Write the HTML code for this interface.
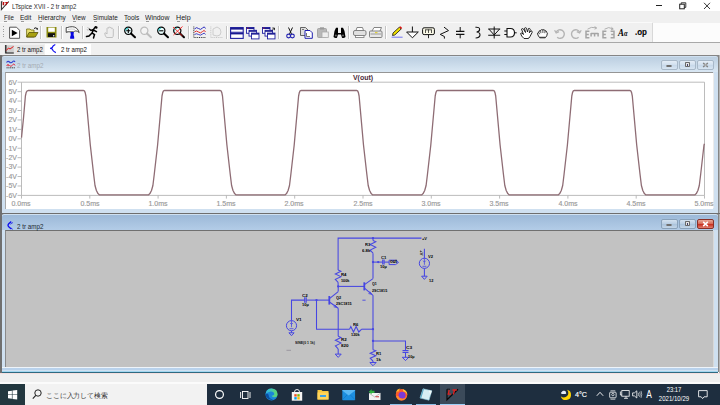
<!DOCTYPE html>
<html><head><meta charset="utf-8"><style>
html,body{margin:0;padding:0;}
body{width:720px;height:405px;position:relative;overflow:hidden;background:#fff;font-family:"Liberation Sans", sans-serif;}
svg{display:block}
</style></head><body>
<div style="position:absolute;left:0px;top:0px;width:720px;height:11px;background:#fff"></div>
<svg style="position:absolute;left:0px;top:0px;" width="11" height="11" viewBox="0 0 11 11"><path d="M1.4 1.3 V9.6 L8.8 1.5" fill="none" stroke="#333" stroke-width="1.1"/><path d="M2.6 1.9 H5 L4.2 2.6 V5.2 H2.6 Z M5.5 1.9 H8.6 L7.2 3.5 L6.5 5.2 H5.4 L5.9 2.9 H5.1 Z" fill="#b81010"/><path d="M1.4 1.3 H3" stroke="#555" stroke-width="0.5"/></svg>
<div style="position:absolute;left:12.2px;top:2.52px;font-size:7.6px;line-height:1;white-space:nowrap;color:#2a2a2a;font-weight:normal;transform:scaleX(0.8);transform-origin:0 0;">LTspice XVII - 2 tr amp2</div>
<div style="position:absolute;left:656px;top:5px;width:6px;height:0.8px;background:#222"></div>
<svg style="position:absolute;left:679px;top:2px;" width="8" height="8" viewBox="0 0 8 8"><rect x="0.7" y="2.2" width="4.6" height="4.6" fill="none" stroke="#222" stroke-width="1"/><path d="M2.2 2.2 V0.8 H6.8 V5.4 H5.3" fill="none" stroke="#222" stroke-width="0.9"/></svg>
<svg style="position:absolute;left:703px;top:2px;" width="8" height="8" viewBox="0 0 8 8"><path d="M1 0.8 L7 7 M7 0.8 L1 7" stroke="#222" stroke-width="0.9"/></svg>
<div style="position:absolute;left:0px;top:11px;width:720px;height:11px;background:#f0f0f0"></div>
<div style="position:absolute;left:3.5px;top:13.77px;font-size:7.6px;line-height:1;white-space:nowrap;color:#1a1a1a;font-weight:normal;transform:scaleX(0.808);transform-origin:0 0;">File</div>
<div style="position:absolute;left:4.1px;top:20.6px;width:3.3px;height:0.6px;background:#999"></div>
<div style="position:absolute;left:20.1px;top:13.77px;font-size:7.6px;line-height:1;white-space:nowrap;color:#1a1a1a;font-weight:normal;transform:scaleX(0.863);transform-origin:0 0;">Edit</div>
<div style="position:absolute;left:20.7px;top:20.6px;width:3.3px;height:0.6px;background:#999"></div>
<div style="position:absolute;left:37.9px;top:13.77px;font-size:7.6px;line-height:1;white-space:nowrap;color:#1a1a1a;font-weight:normal;transform:scaleX(0.855);transform-origin:0 0;">Hierarchy</div>
<div style="position:absolute;left:38.5px;top:20.6px;width:3.3px;height:0.6px;background:#999"></div>
<div style="position:absolute;left:72.39999999999999px;top:13.77px;font-size:7.6px;line-height:1;white-space:nowrap;color:#1a1a1a;font-weight:normal;transform:scaleX(0.832);transform-origin:0 0;">View</div>
<div style="position:absolute;left:73.0px;top:20.6px;width:3.3px;height:0.6px;background:#999"></div>
<div style="position:absolute;left:92.89999999999999px;top:13.77px;font-size:7.6px;line-height:1;white-space:nowrap;color:#1a1a1a;font-weight:normal;transform:scaleX(0.835);transform-origin:0 0;">Simulate</div>
<div style="position:absolute;left:93.5px;top:20.6px;width:3.3px;height:0.6px;background:#999"></div>
<div style="position:absolute;left:124.0px;top:13.77px;font-size:7.6px;line-height:1;white-space:nowrap;color:#1a1a1a;font-weight:normal;transform:scaleX(0.862);transform-origin:0 0;">Tools</div>
<div style="position:absolute;left:124.60000000000001px;top:20.6px;width:3.3px;height:0.6px;background:#999"></div>
<div style="position:absolute;left:145.4px;top:13.77px;font-size:7.6px;line-height:1;white-space:nowrap;color:#1a1a1a;font-weight:normal;transform:scaleX(0.903);transform-origin:0 0;">Window</div>
<div style="position:absolute;left:146.0px;top:20.6px;width:3.3px;height:0.6px;background:#999"></div>
<div style="position:absolute;left:176.0px;top:13.77px;font-size:7.6px;line-height:1;white-space:nowrap;color:#1a1a1a;font-weight:normal;transform:scaleX(0.94);transform-origin:0 0;">Help</div>
<div style="position:absolute;left:176.6px;top:20.6px;width:3.3px;height:0.6px;background:#999"></div>
<div style="position:absolute;left:0px;top:22px;width:720px;height:20px;background:#f0f0f0"></div>
<div style="position:absolute;left:652px;top:23px;width:68px;height:19px;background:#fcfcfc"></div>
<div style="position:absolute;left:651.5px;top:23px;width:1px;height:19px;background:#d8d8d8"></div>
<div style="position:absolute;left:0px;top:22px;width:652px;height:1px;background:#fafafa"></div>
<div style="position:absolute;left:0px;top:41.5px;width:720px;height:1px;background:#a8a8a8"></div>
<div style="position:absolute;left:2.5px;top:26.0px;width:1px;height:1px;background:#a0a0a0"></div>
<div style="position:absolute;left:2.5px;top:28.6px;width:1px;height:1px;background:#a0a0a0"></div>
<div style="position:absolute;left:2.5px;top:31.2px;width:1px;height:1px;background:#a0a0a0"></div>
<div style="position:absolute;left:2.5px;top:33.8px;width:1px;height:1px;background:#a0a0a0"></div>
<div style="position:absolute;left:2.5px;top:36.4px;width:1px;height:1px;background:#a0a0a0"></div>
<svg style="position:absolute;left:9px;top:26px;overflow:visible" width="12" height="13" viewBox="0 0 12 13"><path d="M0.6 1.2 H7.5 L10.6 4.3 V12.3 H0.6 Z" fill="#fff" stroke="#555" stroke-width="1"/><path d="M2.8 3.7 L8.6 7 L2.8 10.3 Z" fill="#000"/></svg>
<svg style="position:absolute;left:25.5px;top:26px;overflow:visible" width="13" height="13" viewBox="0 0 13 13"><path d="M0.6 3 H4 L5 4 H8 V11 H0.6 Z" fill="#e8e070" stroke="#6e6a10" stroke-width="0.8"/><path d="M0.6 11 L3 6.5 H12 L9.3 11 Z" fill="#a8a010" stroke="#55520a" stroke-width="0.8"/><path d="M8 2.5 Q10 0.8 11.5 3" fill="none" stroke="#111" stroke-width="1"/><path d="M10.2 3.4 L12 3.6 L11.8 1.8 Z" fill="#111"/></svg>
<div style="position:absolute;left:40.3px;top:26px;width:1px;height:13px;background:#c4c4c4"></div>
<div style="position:absolute;left:41.3px;top:26px;width:0.6px;height:13px;background:#ffffff"></div>
<svg style="position:absolute;left:46.3px;top:26px;overflow:visible" width="11" height="12" viewBox="0 0 11 12"><rect x="0.5" y="1" width="10" height="10.5" fill="#8a8a10"/><rect x="2.2" y="1.6" width="6.6" height="4.2" fill="#fff"/><rect x="2" y="7.2" width="7" height="3.8" fill="#111"/><rect x="7" y="9.2" width="1.4" height="1.2" fill="#fff"/></svg>
<div style="position:absolute;left:60.8px;top:26px;width:1px;height:13px;background:#c4c4c4"></div>
<div style="position:absolute;left:61.8px;top:26px;width:0.6px;height:13px;background:#ffffff"></div>
<svg style="position:absolute;left:65px;top:26px;overflow:visible" width="15" height="14" viewBox="0 0 15 14"><path d="M1.2 1.6 H2.2 Q4 0.7 7.5 0.7 Q12.5 1 14.2 6.6 Q12.8 5 10.8 4.9 Q9.5 5.3 8.5 5.8 H2.2 V6.3 H1.2 Z" fill="#fff" stroke="#333" stroke-width="0.9" stroke-linejoin="round"/><path d="M3 3.4 Q6 2.6 10 3.3" stroke="#999" stroke-width="0.5" fill="none"/><path d="M5.5 6 H8.8 L8.6 9 Q9.5 11 9.2 12.7 H5.2 Q4.8 11 5.8 9 Z" fill="#0808e0"/></svg>
<div style="position:absolute;left:81.5px;top:26px;width:1px;height:13px;background:#c4c4c4"></div>
<div style="position:absolute;left:82.5px;top:26px;width:0.6px;height:13px;background:#ffffff"></div>
<svg style="position:absolute;left:86px;top:26px;overflow:visible" width="12" height="13" viewBox="0 0 12 13"><path d="M9.5 0.8 L7.5 3.5 L5 4.5 L3.5 3.2 M7.5 3.5 L6 7 L8.5 8.5 L7.5 12 M6 7 L3 10 L0.5 10.5 M7.3 4 L10.5 5.6" fill="none" stroke="#000" stroke-width="1.5" stroke-linecap="round"/><circle cx="10.3" cy="1.5" r="1.2" fill="#000"/><path d="M1.5 1.5 L3 2.6 M0.8 3.5 L2.3 4.3" stroke="#888" stroke-width="0.6"/></svg>
<svg style="position:absolute;left:104px;top:26px;overflow:visible" width="11" height="13" viewBox="0 0 11 13"><path d="M2.5 11.5 Q0.5 9 0.8 7 L1.8 6.8 L3 8 V2.5 Q3.5 1.3 4.3 2.3 V1.5 Q5.2 0.5 6 1.5 V1.8 Q7 1 7.7 2 V2.6 Q8.7 1.9 9.3 3 V9 Q9.2 11 8.5 11.5 Z" fill="#eee" stroke="#bbb" stroke-width="0.9"/></svg>
<div style="position:absolute;left:118.1px;top:26px;width:1px;height:13px;background:#c4c4c4"></div>
<div style="position:absolute;left:119.1px;top:26px;width:0.6px;height:13px;background:#ffffff"></div>
<svg style="position:absolute;left:124px;top:26.3px;overflow:visible" width="12" height="12" viewBox="0 0 12 12"><circle cx="4.3" cy="4.8" r="3.6" fill="#e8fcfc" stroke="#000" stroke-width="1.2"/><path d="M1.5 4.5 A3 3 0 0 1 4 2" stroke="#30d0d0" stroke-width="1.2" fill="none"/><path d="M7 7.5 L11 11.3" stroke="#000" stroke-width="2" stroke-linecap="round"/><path d="M2.2 4.8 H6.4 M4.3 2.7 V6.9" stroke="#000" stroke-width="1.1"/></svg>
<svg style="position:absolute;left:140.4px;top:26.3px;overflow:visible" width="12" height="12" viewBox="0 0 12 12"><circle cx="4.3" cy="4.8" r="3.6" fill="#f4f4f4" stroke="#bdbdbd" stroke-width="1.2"/><path d="M7 7.5 L11 11.3" stroke="#bdbdbd" stroke-width="2" stroke-linecap="round"/></svg>
<svg style="position:absolute;left:156.6px;top:26.3px;overflow:visible" width="12" height="12" viewBox="0 0 12 12"><circle cx="4.3" cy="4.8" r="3.6" fill="#e8fcfc" stroke="#000" stroke-width="1.2"/><path d="M1.5 4.5 A3 3 0 0 1 4 2" stroke="#30d0d0" stroke-width="1.2" fill="none"/><path d="M7 7.5 L11 11.3" stroke="#000" stroke-width="2" stroke-linecap="round"/><path d="M2.2 4.8 H6.4" stroke="#000" stroke-width="1.1"/></svg>
<svg style="position:absolute;left:173px;top:26.3px;overflow:visible" width="12" height="12" viewBox="0 0 12 12"><circle cx="4.3" cy="4.8" r="3.6" fill="#e8fcfc" stroke="#000" stroke-width="1.2"/><path d="M1.5 4.5 A3 3 0 0 1 4 2" stroke="#30d0d0" stroke-width="1.2" fill="none"/><path d="M7 7.5 L11 11.3" stroke="#000" stroke-width="2" stroke-linecap="round"/><path d="M0 1 L9.5 10 M9.5 0.5 L0.5 9" stroke="#ff2020" stroke-width="0.9"/></svg>
<div style="position:absolute;left:188.0px;top:26px;width:1px;height:13px;background:#c4c4c4"></div>
<div style="position:absolute;left:189.0px;top:26px;width:0.6px;height:13px;background:#ffffff"></div>
<svg style="position:absolute;left:193px;top:26px;overflow:visible" width="13" height="12" viewBox="0 0 13 12"><path d="M0.8 0.5 V11.5 H12.5" fill="none" stroke="#222" stroke-width="0.9" stroke-dasharray="1 0.8"/><path d="M1.5 3 Q3.5 0.5 5.5 2.5 T9.5 2 T12.5 2.5" fill="none" stroke="#3030c0" stroke-width="1"/><path d="M1.5 6 Q3.5 4 5.5 6 T9.5 5.5 T12.5 6" fill="none" stroke="#e03030" stroke-width="1"/><path d="M1.5 8.5 Q3.5 7 5.5 8.5 T9.5 8 T12.5 8.5" fill="none" stroke="#3030c0" stroke-width="0.9"/></svg>
<svg style="position:absolute;left:209.5px;top:26px;overflow:visible" width="13" height="12" viewBox="0 0 13 12"><path d="M0.8 0.5 V11.5 H12.5" fill="none" stroke="#bbb" stroke-width="0.8" stroke-dasharray="1 0.8"/><path d="M3 9 V3 L7 1 Q11 2 11 6 Q11 10 7 10 Z" fill="none" stroke="#c8c8c8" stroke-width="0.9"/></svg>
<div style="position:absolute;left:225.5px;top:26px;width:1px;height:13px;background:#c4c4c4"></div>
<div style="position:absolute;left:226.5px;top:26px;width:0.6px;height:13px;background:#ffffff"></div>
<svg style="position:absolute;left:229.5px;top:26.5px;overflow:visible" width="14" height="12" viewBox="0 0 14 12"><rect x="0.6" y="0.6" width="12.6" height="10.8" fill="#fff" stroke="#2020a0" stroke-width="1.1"/><rect x="0.6" y="0.6" width="12.6" height="2" fill="#1a1a90"/><rect x="0.6" y="5.4" width="12.6" height="2" fill="#1a1a90"/><path d="M0.6 5.2 H13.2" stroke="#2020a0" stroke-width="0.8"/></svg>
<svg style="position:absolute;left:246.2px;top:26.5px;overflow:visible" width="14" height="12" viewBox="0 0 14 12"><rect x="0.5" y="0.5" width="7.5" height="5.8" fill="#fff" stroke="#2020a0" stroke-width="0.9"/><rect x="0.5" y="0.5" width="7.5" height="1.5" fill="#1a1a90"/><rect x="3.0" y="3.3" width="7.5" height="5.8" fill="#fff" stroke="#2020a0" stroke-width="0.9"/><rect x="3.0" y="3.3" width="7.5" height="1.5" fill="#1a1a90"/><rect x="5.5" y="6.1" width="7.5" height="5.8" fill="#fff" stroke="#2020a0" stroke-width="0.9"/><rect x="5.5" y="6.1" width="7.5" height="1.5" fill="#1a1a90"/><path d="M1 1.2 H2.5" stroke="#e02020" stroke-width="0.7"/></svg>
<svg style="position:absolute;left:262.2px;top:26.5px;overflow:visible" width="14" height="12" viewBox="0 0 14 12"><rect x="0.5" y="0.5" width="7.5" height="5.8" fill="#fff" stroke="#2020a0" stroke-width="0.9"/><rect x="0.5" y="0.5" width="7.5" height="1.5" fill="#1a1a90"/><rect x="3.0" y="3.3" width="7.5" height="5.8" fill="#fff" stroke="#2020a0" stroke-width="0.9"/><rect x="3.0" y="3.3" width="7.5" height="1.5" fill="#1a1a90"/><rect x="5.5" y="6.1" width="7.5" height="5.8" fill="#fff" stroke="#2020a0" stroke-width="0.9"/><rect x="5.5" y="6.1" width="7.5" height="1.5" fill="#1a1a90"/><path d="M1 1.2 H2.5" stroke="#e02020" stroke-width="0.7"/><path d="M10 3.5 L12.5 1 M10.3 1 H12.5 V3.2" fill="none" stroke="#111" stroke-width="0.8"/></svg>
<div style="position:absolute;left:278.1px;top:26px;width:1px;height:13px;background:#c4c4c4"></div>
<div style="position:absolute;left:279.1px;top:26px;width:0.6px;height:13px;background:#ffffff"></div>
<svg style="position:absolute;left:285.8px;top:26.5px;overflow:visible" width="9" height="12" viewBox="0 0 9 12"><path d="M2.5 0.5 L5.5 7 M6.5 0.5 L3.5 7" stroke="#111" stroke-width="1"/><circle cx="2.6" cy="9" r="1.9" fill="none" stroke="#2020b0" stroke-width="1.1"/><circle cx="6.4" cy="9" r="1.9" fill="none" stroke="#2020b0" stroke-width="1.1"/></svg>
<svg style="position:absolute;left:300px;top:26.5px;overflow:visible" width="13" height="12" viewBox="0 0 13 12"><path d="M0.5 0.5 H5.5 L8 3 V8.5 H0.5 Z" fill="#ddd" stroke="#555" stroke-width="0.9"/><path d="M2 2.5 H4" stroke="#333" stroke-width="0.6"/><path d="M5 3.5 H10 L12.3 5.8 V11.3 H5 Z" fill="#fff" stroke="#2020b0" stroke-width="1"/><path d="M6.5 6 V9.5 H10" stroke="#555" stroke-width="0.8" fill="none"/></svg>
<svg style="position:absolute;left:316.5px;top:27px;overflow:visible" width="12" height="11" viewBox="0 0 12 11"><rect x="0.5" y="1.5" width="9" height="9" rx="1" fill="#b8b8b8" stroke="#9a9a9a" stroke-width="0.8"/><rect x="3" y="0.3" width="4" height="2.2" fill="#9a9a9a"/><rect x="5" y="5" width="6.3" height="5.5" fill="#eee" stroke="#aaa" stroke-width="0.8"/></svg>
<svg style="position:absolute;left:332.5px;top:26.5px;overflow:visible" width="13" height="12" viewBox="0 0 13 12"><path d="M1.5 4 L3 0.8 H5 V6 H8 V0.8 H10 L11.5 4 L12.5 10 Q11 11.5 9 10.8 L8 7.5 H5 L4 10.8 Q2 11.5 0.5 10 Z" fill="#000"/><circle cx="2.8" cy="8.5" r="1" fill="#666"/><circle cx="10" cy="8.5" r="1" fill="#666"/></svg>
<div style="position:absolute;left:347.8px;top:26px;width:1px;height:13px;background:#c4c4c4"></div>
<div style="position:absolute;left:348.8px;top:26px;width:0.6px;height:13px;background:#ffffff"></div>
<svg style="position:absolute;left:353px;top:27px;overflow:visible" width="14" height="11" viewBox="0 0 14 11"><path d="M3 3.5 L4 0.5 H9.5 L10.5 3.5" fill="#fff" stroke="#777" stroke-width="0.9"/><rect x="0.5" y="3.5" width="12.5" height="5" rx="1.5" fill="#e0e0e0" stroke="#777" stroke-width="0.9"/><rect x="2.5" y="8.5" width="8.5" height="2" fill="#fff" stroke="#777" stroke-width="0.8"/></svg>
<svg style="position:absolute;left:368.8px;top:26.8px;overflow:visible" width="14" height="11" viewBox="0 0 14 11"><path d="M3 4 L5 0.5 H12.5 L11 4" fill="#fff" stroke="#777" stroke-width="0.9"/><rect x="0.5" y="4" width="12.5" height="6.5" rx="1" fill="#e8e8e8" stroke="#777" stroke-width="0.9"/><path d="M1.5 7 H12" stroke="#777" stroke-width="0.7"/><rect x="6" y="5" width="2.5" height="1.2" fill="#e0d040"/></svg>
<div style="position:absolute;left:385.1px;top:26px;width:1px;height:13px;background:#c4c4c4"></div>
<div style="position:absolute;left:386.1px;top:26px;width:0.6px;height:13px;background:#ffffff"></div>
<svg style="position:absolute;left:390.8px;top:26px;overflow:visible" width="12" height="12" viewBox="0 0 12 12"><path d="M1.5 9.5 L2 7 L8.3 1.2 L10.2 3 L3.8 9 Z" fill="#f0e000" stroke="#111" stroke-width="0.8"/><path d="M8.3 1.2 L9.5 0.2 L11.2 2 L10.2 3 Z" fill="#e01010"/><path d="M0.6 11.2 H11.6" stroke="#7070f0" stroke-width="1"/></svg>
<svg style="position:absolute;left:405.8px;top:26px;overflow:visible" width="13" height="13" viewBox="0 0 13 13"><path d="M6.4 0.5 V6" stroke="#111" stroke-width="1"/><path d="M0.6 6 H12.3 L6.4 11.8 Z" fill="#fff" stroke="#111" stroke-width="1"/></svg>
<svg style="position:absolute;left:421.8px;top:27px;overflow:visible" width="13" height="12" viewBox="0 0 13 12"><rect x="0.6" y="0.8" width="11.8" height="6.8" rx="1.5" fill="#fbfae8" stroke="#111" stroke-width="1"/><path d="M3.5 2.5 V6 M6.5 2.5 V6 M9.5 2.5 V6 M3.5 2.8 H9.5" stroke="#111" stroke-width="0.7"/><path d="M6.5 7.6 V11.2" stroke="#111" stroke-width="0.9"/></svg>
<svg style="position:absolute;left:440.3px;top:27px;overflow:visible" width="8" height="12" viewBox="0 0 8 12"><path d="M4 0.1 L8.5 3.6 L0.2 7.4 L4.4 9.5 V11.6" fill="none" stroke="#111" stroke-width="1"/></svg>
<svg style="position:absolute;left:456.1px;top:26px;overflow:visible" width="10" height="13" viewBox="0 0 10 13"><path d="M4.2 1 V5.3 M4.2 8.4 V12.3" stroke="#111" stroke-width="1"/><path d="M0 5.3 H8.4 M0 8.4 H8.4" stroke="#111" stroke-width="1.3"/></svg>
<svg style="position:absolute;left:474.6px;top:26px;overflow:visible" width="7" height="13" viewBox="0 0 7 13"><path d="M0.4 1.3 Q4.8 0.8 4.6 3.6 Q4.4 5.8 1.6 6 Q5.2 6.4 5 9.2 Q4.5 12 0.6 12" fill="none" stroke="#111" stroke-width="1.1"/></svg>
<svg style="position:absolute;left:488.3px;top:26px;overflow:visible" width="13" height="13" viewBox="0 0 13 13"><path d="M6.2 0.5 V12.5" stroke="#111" stroke-width="1"/><path d="M0.2 3.0 H12.2 M0.2 9.2 H12.2" stroke="#111" stroke-width="1.1"/><path d="M0.8 3.0 L6.2 9.0 L11.6 3.0" fill="none" stroke="#111" stroke-width="1"/></svg>
<svg style="position:absolute;left:504px;top:27px;overflow:visible" width="13" height="12" viewBox="0 0 13 12"><path d="M3 1.5 H6.5 Q10.5 1.5 10.5 5.8 Q10.5 10 6.5 10 H3 Z" fill="#fff" stroke="#111" stroke-width="1.1"/><path d="M0.3 4 H3 M0.3 7.5 H3 M10.5 5.8 H12.7" stroke="#111" stroke-width="1"/></svg>
<svg style="position:absolute;left:520.2px;top:26.5px;overflow:visible" width="13" height="12" viewBox="0 0 13 12"><path d="M4 11.5 Q1 9 0.6 6.5 L1.8 6 L3.5 7.5 L1.5 2 Q2.5 1 3.5 2 L5.5 5.5 L4.5 1.2 Q5.5 0.2 6.5 1.2 L7.5 5 L8.5 1.5 Q9.8 1 10.3 2.2 L9.3 5.8 L11 3.8 Q12.5 4 12.2 5.3 L10 9.5 Q9 11.5 8 11.5 Z" fill="#fff" stroke="#111" stroke-width="0.9"/><circle cx="2.5" cy="6.5" r="0.5" fill="#111"/></svg>
<svg style="position:absolute;left:537.2px;top:28.8px;overflow:visible" width="11" height="10" viewBox="0 0 11 10"><path d="M2.8 8.8 Q1.2 7 0.6 5 Q0.4 3.6 1.8 3.2 Q2 1.3 3.6 1.4 Q4.5 0.2 5.8 0.8 Q7.2 0.3 8 1.6 Q9.6 1.8 9.8 3.4 L10.4 4.2 Q10.2 7.2 8.2 8.8 Z" fill="#fff" stroke="#111" stroke-width="0.9" stroke-linejoin="round"/><path d="M3.6 1.6 L3.9 4.2 M5.8 1 L5.9 4 M8 1.8 L7.8 4.2 M1.8 3.4 L2.6 5.2" stroke="#111" stroke-width="0.7"/><path d="M2.9 8.2 H8.1" stroke="#111" stroke-width="0.6"/></svg>
<svg style="position:absolute;left:553.5px;top:27.5px;overflow:visible" width="12" height="11" viewBox="0 0 12 11"><path d="M2.2 4 A4.3 4.3 0 1 1 3.2 9.3" fill="none" stroke="#b4b4b4" stroke-width="1.4"/><path d="M0.6 2.2 L2.2 5 L5 3.6" fill="none" stroke="#b4b4b4" stroke-width="1.3"/></svg>
<svg style="position:absolute;left:570px;top:27.5px;overflow:visible" width="12" height="11" viewBox="0 0 12 11"><path d="M9.6 4 A4.3 4.3 0 1 0 8.6 9.3" fill="none" stroke="#b4b4b4" stroke-width="1.4"/><path d="M11.2 2.2 L9.6 5 L6.8 3.6" fill="none" stroke="#b4b4b4" stroke-width="1.3"/></svg>
<svg style="position:absolute;left:585px;top:26px;overflow:visible" width="14" height="13" viewBox="0 0 14 13"><path d="M2.5 3.2 Q6 0.3 11 1.8" fill="none" stroke="#a8a8a8" stroke-width="0.9"/><path d="M9.6 0.6 L11.8 2 L9.6 3.2" fill="none" stroke="#a8a8a8" stroke-width="0.9"/><path d="M4.4 5.2 H1 V11.8 H4.4 M1 8.5 H3.8" fill="none" stroke="#a4a4a4" stroke-width="1.5"/><path d="M6 7.4 H13.2 M6.1 7.0 V10.4 M9.6 7.4 V10.4 M13.1 7.0 V10.4" fill="none" stroke="#a4a4a4" stroke-width="1.5"/></svg>
<svg style="position:absolute;left:602px;top:26px;overflow:visible" width="14" height="13" viewBox="0 0 14 13"><path d="M2.5 3.2 Q6.5 0.2 11 2.8" fill="none" stroke="#a8a8a8" stroke-width="0.9"/><path d="M9.4 1.2 L11.3 3 L9 3.8" fill="none" stroke="#a8a8a8" stroke-width="0.9"/><path d="M4.4 5.2 H1 V11.8 H4.4 M1 8.5 H3.8" fill="none" stroke="#a4a4a4" stroke-width="1.5"/><path d="M8.6 5.2 H12 V11.8 H8.6 M12 8.5 H9.2" fill="none" stroke="#a4a4a4" stroke-width="1.5"/></svg>
<div style="position:absolute;left:618.3px;top:27.81px;font-size:10.5px;line-height:1;white-space:nowrap;color:#000;font-weight:bold;transform:scaleX(0.85);transform-origin:0 0;font-style:italic;font-family:Liberation Serif,serif;">A<span style="font-size:7.5px">α</span></div>
<div style="position:absolute;left:635px;top:28.29px;font-size:8.4px;line-height:1;white-space:nowrap;color:#000;font-weight:bold;transform:scaleX(0.95);transform-origin:0 0;-webkit-text-stroke:0.1px #000;">.op</div>
<div style="position:absolute;left:0px;top:42.5px;width:720px;height:12.5px;background:#f0f0f0"></div>
<div style="position:absolute;left:4.3px;top:44.9px;width:40px;height:8.9px;background:#e6e6e6"></div>
<svg style="position:absolute;left:5px;top:45.2px;overflow:visible" width="9" height="9" viewBox="0 0 9 9"><rect x="0.8" y="0.3" width="8" height="7.3" fill="#cfcfcf"/><path d="M0.8 0 V8 H8.8" stroke="#111" stroke-width="1.2" fill="none"/><path d="M1.3 5.5 L3.5 3 L5 4 L8.5 1.5" stroke="#e81818" stroke-width="1" fill="none"/></svg>
<div style="position:absolute;left:16.6px;top:45.64px;font-size:7.4px;line-height:1;white-space:nowrap;color:#111;font-weight:normal;transform:scaleX(0.83);transform-origin:0 0;">2 tr amp2</div>
<div style="position:absolute;left:44.6px;top:43.6px;width:46px;height:11.4px;background:#fff"></div>
<svg style="position:absolute;left:50px;top:44.3px;overflow:visible" width="7" height="10" viewBox="0 0 7 10"><path d="M5.3 0.5 Q2.6 1.6 2.2 3.6 L0.6 4.3 L2.2 5 Q2.6 7.2 5.8 8.6" fill="none" stroke="#1010f0" stroke-width="1.3" stroke-linejoin="round"/></svg>
<div style="position:absolute;left:60.6px;top:45.64px;font-size:7.4px;line-height:1;white-space:nowrap;color:#111;font-weight:normal;transform:scaleX(0.83);transform-origin:0 0;">2 tr amp2</div>
<div style="position:absolute;left:0px;top:55px;width:720px;height:317px;background:#858585"></div>
<div style="position:absolute;left:0px;top:55px;width:1.8px;height:318px;background:#707070"></div>
<div style="position:absolute;left:719px;top:55px;width:1px;height:318px;background:#b4b4b4"></div>
<div style="position:absolute;left:1.8px;top:55.9px;width:716.4px;height:157.4px;background:#cfe0f0;border-radius:2px 2px 0 0;"></div>
<div style="position:absolute;left:2.0px;top:56.5px;width:716px;height:15.4px;background:linear-gradient(#bccfe1,#d9e7f3);border-radius:2px 2px 0 0"></div>
<div style="position:absolute;left:5.0px;top:72.0px;width:708.2px;height:136.8px;background:#fff;border-top:0.9px solid #959595;border-left:1.5px solid #a8a8a8;box-sizing:border-box"></div>
<div style="position:absolute;left:712.6px;top:72.5px;width:1.2px;height:135.3px;background:#ececec"></div>
<svg style="position:absolute;left:6.3px;top:60.3px;overflow:visible" width="9" height="10" viewBox="0 0 9 10"><path d="M0.5 2.5 Q2 0.5 3.5 2 T6.5 1.8 T9 2" fill="none" stroke="#3040d0" stroke-width="1.1"/><path d="M0.5 5.5 Q2 3.5 3.5 5.5 T6.5 5 T9 5.5" fill="none" stroke="#e03040" stroke-width="1"/><rect x="1.5" y="5" width="1.2" height="1.2" fill="#e03040"/><path d="M0.5 7.8 H9" stroke="#444" stroke-width="1" stroke-dasharray="1.2 0.6"/></svg>
<div style="position:absolute;left:16.7px;top:62.21px;font-size:7.2px;line-height:1;white-space:nowrap;color:#a4aab2;font-weight:normal;transform:scaleX(0.87);transform-origin:0 0;">2 tr amp2</div>
<div style="position:absolute;left:0px;top:213.3px;width:720px;height:1.2px;background:#6e6e6e"></div>
<div style="position:absolute;left:1.8px;top:214.5px;width:716.4px;height:1px;background:#cfe2f4"></div>
<div style="position:absolute;left:1.8px;top:214.4px;width:716.4px;height:158.2px;background:#cfe0f0;border-radius:2px 2px 0 0;"></div>
<div style="position:absolute;left:2.0px;top:215.0px;width:716px;height:15.4px;background:linear-gradient(#9cb9d8,#b3cce7);border-radius:2px 2px 0 0"></div>
<div style="position:absolute;left:5.0px;top:230.4px;width:708.2px;height:136.6px;background:#c2c2c2;border-top:0.9px solid #707070;border-left:1.2px solid #8a8a8a;box-sizing:border-box"></div>
<div style="position:absolute;left:712.6px;top:231px;width:1.2px;height:136px;background:#d8d8d8"></div>
<div style="position:absolute;left:1.8px;top:367.0px;width:716.4px;height:1.2px;background:#eef4fa"></div>
<div style="position:absolute;left:1.8px;top:368.2px;width:716.4px;height:2.3px;background:#b9d2ec"></div>
<div style="position:absolute;left:1.8px;top:370.5px;width:716.4px;height:1.3px;background:#a2d6f0"></div>
<div style="position:absolute;left:1.8px;top:371.8px;width:716.4px;height:0.9px;background:#2e6a80"></div>
<svg style="position:absolute;left:7.3px;top:221px;overflow:visible" width="7" height="9" viewBox="0 0 7 9"><path d="M4.3 0.6 Q1 3 1 4.2 Q1 5.5 4.4 8" fill="none" stroke="#1010f0" stroke-width="1.3"/><path d="M3.3 3.3 L6 1.4 M3.6 6.6 L5.8 8.4" stroke="#1010f0" stroke-width="0.7"/></svg>
<div style="position:absolute;left:16.7px;top:222.51px;font-size:7.2px;line-height:1;white-space:nowrap;color:#202830;font-weight:normal;transform:scaleX(0.87);transform-origin:0 0;">2 tr amp2</div>
<div style="position:absolute;left:661px;top:60.4px;width:16.5px;height:9.3px;background:linear-gradient(#e4edf6,#d0dfee 50%,#c8d9ea 55%,#d8e5f2);border:0.6px solid #a8b8c8;border-radius:2px;box-sizing:border-box"></div>
<div style="position:absolute;left:666.0px;top:64.6px;width:6.2px;height:2.8px;background:#e8e8e8;border:0.8px solid #707070;border-radius:1.2px;box-sizing:border-box"></div>
<div style="position:absolute;left:679px;top:60.4px;width:16.5px;height:9.3px;background:linear-gradient(#e4edf6,#d0dfee 50%,#c8d9ea 55%,#d8e5f2);border:0.6px solid #a8b8c8;border-radius:2px;box-sizing:border-box"></div>
<div style="position:absolute;left:684.6px;top:62.4px;width:5.4px;height:5.0px;background:#e4e4e4;border:0.8px solid #6a6a6a;border-radius:0.8px;box-sizing:border-box"></div>
<div style="position:absolute;left:686.5px;top:64.2px;width:1.6px;height:1.4px;background:#40406a"></div>
<div style="position:absolute;left:697px;top:60.4px;width:16.5px;height:9.3px;background:linear-gradient(#e4edf6,#d0dfee 50%,#c8d9ea 55%,#d8e5f2);border:0.6px solid #a8b8c8;border-radius:2px;box-sizing:border-box"></div>
<svg style="position:absolute;left:702px;top:62.199999999999996px;overflow:visible" width="7" height="6" viewBox="0 0 7 6"><path d="M1.2 0.9 L5.8 5.1 M5.8 0.9 L1.2 5.1" stroke="#666" stroke-width="1.4"/><path d="M1.6 1.3 L5.4 4.7 M5.4 1.3 L1.6 4.7" stroke="#f4f4f4" stroke-width="0.6"/></svg>
<div style="position:absolute;left:661px;top:219.4px;width:16.5px;height:9.3px;background:linear-gradient(#d4e2f0,#b8cde2 50%,#acc4dc 55%,#c4d6e8);border:0.6px solid #8aa2ba;border-radius:2px;box-sizing:border-box"></div>
<div style="position:absolute;left:666.0px;top:223.6px;width:6.2px;height:2.8px;background:#e8e8e8;border:0.8px solid #707070;border-radius:1.2px;box-sizing:border-box"></div>
<div style="position:absolute;left:679px;top:219.4px;width:16.5px;height:9.3px;background:linear-gradient(#d4e2f0,#b8cde2 50%,#acc4dc 55%,#c4d6e8);border:0.6px solid #8aa2ba;border-radius:2px;box-sizing:border-box"></div>
<div style="position:absolute;left:684.6px;top:221.4px;width:5.4px;height:5.0px;background:#e4e4e4;border:0.8px solid #6a6a6a;border-radius:0.8px;box-sizing:border-box"></div>
<div style="position:absolute;left:686.5px;top:223.20000000000002px;width:1.6px;height:1.4px;background:#40406a"></div>
<div style="position:absolute;left:697px;top:219.4px;width:16.5px;height:9.3px;background:linear-gradient(#e8a898,#d86a58 45%,#c83020 55%,#e08070);border:0.6px solid #8a3028;border-radius:2px;box-sizing:border-box"></div>
<svg style="position:absolute;left:702px;top:221.20000000000002px;overflow:visible" width="7" height="6" viewBox="0 0 7 6"><path d="M1.2 0.9 L5.8 5.1 M5.8 0.9 L1.2 5.1" stroke="#fff" stroke-width="1.5"/></svg>
<svg style="position:absolute;left:0px;top:0px;" width="720" height="215" viewBox="0 0 720 215"><path d="M21.5 82.2 H704.5 V195.4 H21.5 Z" fill="none" stroke="#b4b4b4" stroke-width="0.9"/><path d="M17.5 195.40 H21.5" stroke="#b4b4b4" stroke-width="0.9"/><path d="M17.5 185.97 H21.5" stroke="#b4b4b4" stroke-width="0.9"/><path d="M17.5 176.53 H21.5" stroke="#b4b4b4" stroke-width="0.9"/><path d="M17.5 167.10 H21.5" stroke="#b4b4b4" stroke-width="0.9"/><path d="M17.5 157.67 H21.5" stroke="#b4b4b4" stroke-width="0.9"/><path d="M17.5 148.23 H21.5" stroke="#b4b4b4" stroke-width="0.9"/><path d="M17.5 138.80 H21.5" stroke="#b4b4b4" stroke-width="0.9"/><path d="M17.5 129.37 H21.5" stroke="#b4b4b4" stroke-width="0.9"/><path d="M17.5 119.93 H21.5" stroke="#b4b4b4" stroke-width="0.9"/><path d="M17.5 110.50 H21.5" stroke="#b4b4b4" stroke-width="0.9"/><path d="M17.5 101.07 H21.5" stroke="#b4b4b4" stroke-width="0.9"/><path d="M17.5 91.63 H21.5" stroke="#b4b4b4" stroke-width="0.9"/><path d="M17.5 82.20 H21.5" stroke="#b4b4b4" stroke-width="0.9"/><path d="M21.50 195.4 V198.6" stroke="#b4b4b4" stroke-width="0.9"/><path d="M89.80 195.4 V198.6" stroke="#b4b4b4" stroke-width="0.9"/><path d="M158.10 195.4 V198.6" stroke="#b4b4b4" stroke-width="0.9"/><path d="M226.40 195.4 V198.6" stroke="#b4b4b4" stroke-width="0.9"/><path d="M294.70 195.4 V198.6" stroke="#b4b4b4" stroke-width="0.9"/><path d="M363.00 195.4 V198.6" stroke="#b4b4b4" stroke-width="0.9"/><path d="M431.30 195.4 V198.6" stroke="#b4b4b4" stroke-width="0.9"/><path d="M499.60 195.4 V198.6" stroke="#b4b4b4" stroke-width="0.9"/><path d="M567.90 195.4 V198.6" stroke="#b4b4b4" stroke-width="0.9"/><path d="M636.20 195.4 V198.6" stroke="#b4b4b4" stroke-width="0.9"/><path d="M704.50 195.4 V198.6" stroke="#b4b4b4" stroke-width="0.9"/><path d="M21.50 137.60 L23.50 118.00 L25.40 96.00 L26.20 92.40 L27.20 90.80 L28.20 90.50 L83.60 90.50 L84.40 90.90 L85.20 92.60 L85.90 96.00 L90.30 145.00 L93.60 174.00 L95.00 185.50 L96.40 190.50 L98.00 193.60 L99.50 194.90 L148.40 194.90 L149.90 193.60 L151.50 190.50 L152.90 185.50 L154.30 174.00 L157.60 145.00 L162.00 96.00 L162.70 92.60 L163.50 90.90 L164.30 90.50 L220.20 90.50 L221.00 90.90 L221.80 92.60 L222.50 96.00 L226.90 145.00 L230.20 174.00 L231.60 185.50 L233.00 190.50 L234.60 193.60 L236.10 194.90 L285.00 194.90 L286.50 193.60 L288.10 190.50 L289.50 185.50 L290.90 174.00 L294.20 145.00 L298.60 96.00 L299.30 92.60 L300.10 90.90 L300.90 90.50 L356.80 90.50 L357.60 90.90 L358.40 92.60 L359.10 96.00 L363.50 145.00 L366.80 174.00 L368.20 185.50 L369.60 190.50 L371.20 193.60 L372.70 194.90 L421.60 194.90 L423.10 193.60 L424.70 190.50 L426.10 185.50 L427.50 174.00 L430.80 145.00 L435.20 96.00 L435.90 92.60 L436.70 90.90 L437.50 90.50 L493.40 90.50 L494.20 90.90 L495.00 92.60 L495.70 96.00 L500.10 145.00 L503.40 174.00 L504.80 185.50 L506.20 190.50 L507.80 193.60 L509.30 194.90 L558.20 194.90 L559.70 193.60 L561.30 190.50 L562.70 185.50 L564.10 174.00 L567.40 145.00 L571.80 96.00 L572.50 92.60 L573.30 90.90 L574.10 90.50 L630.00 90.50 L630.80 90.90 L631.60 92.60 L632.30 96.00 L636.70 145.00 L640.00 174.00 L641.40 185.50 L642.80 190.50 L644.40 193.60 L645.90 194.90 L694.80 194.90 L696.30 193.60 L697.90 190.50 L699.30 185.50 L700.70 174.00 L704.00 145.00 L704.50 143.70" fill="none" stroke="#8e6c74" stroke-width="1.3" stroke-linejoin="round"/></svg>
<div style="position:absolute;left:-983.0px;width:1000px;text-align:right;top:191.77px;font-size:7.6px;line-height:1;white-space:nowrap;color:#989898;font-weight:normal;transform:scaleX(0.92);transform-origin:100% 0;-webkit-text-stroke:0.15px #989898;">-6V</div>
<div style="position:absolute;left:-983.0px;width:1000px;text-align:right;top:182.33px;font-size:7.6px;line-height:1;white-space:nowrap;color:#989898;font-weight:normal;transform:scaleX(0.92);transform-origin:100% 0;-webkit-text-stroke:0.15px #989898;">-5V</div>
<div style="position:absolute;left:-983.0px;width:1000px;text-align:right;top:172.90px;font-size:7.6px;line-height:1;white-space:nowrap;color:#989898;font-weight:normal;transform:scaleX(0.92);transform-origin:100% 0;-webkit-text-stroke:0.15px #989898;">-4V</div>
<div style="position:absolute;left:-983.0px;width:1000px;text-align:right;top:163.47px;font-size:7.6px;line-height:1;white-space:nowrap;color:#989898;font-weight:normal;transform:scaleX(0.92);transform-origin:100% 0;-webkit-text-stroke:0.15px #989898;">-3V</div>
<div style="position:absolute;left:-983.0px;width:1000px;text-align:right;top:154.03px;font-size:7.6px;line-height:1;white-space:nowrap;color:#989898;font-weight:normal;transform:scaleX(0.92);transform-origin:100% 0;-webkit-text-stroke:0.15px #989898;">-2V</div>
<div style="position:absolute;left:-983.0px;width:1000px;text-align:right;top:144.60px;font-size:7.6px;line-height:1;white-space:nowrap;color:#989898;font-weight:normal;transform:scaleX(0.92);transform-origin:100% 0;-webkit-text-stroke:0.15px #989898;">-1V</div>
<div style="position:absolute;left:-983.0px;width:1000px;text-align:right;top:135.17px;font-size:7.6px;line-height:1;white-space:nowrap;color:#989898;font-weight:normal;transform:scaleX(0.92);transform-origin:100% 0;-webkit-text-stroke:0.15px #989898;">0V</div>
<div style="position:absolute;left:-983.0px;width:1000px;text-align:right;top:125.73px;font-size:7.6px;line-height:1;white-space:nowrap;color:#989898;font-weight:normal;transform:scaleX(0.92);transform-origin:100% 0;-webkit-text-stroke:0.15px #989898;">1V</div>
<div style="position:absolute;left:-983.0px;width:1000px;text-align:right;top:116.30px;font-size:7.6px;line-height:1;white-space:nowrap;color:#989898;font-weight:normal;transform:scaleX(0.92);transform-origin:100% 0;-webkit-text-stroke:0.15px #989898;">2V</div>
<div style="position:absolute;left:-983.0px;width:1000px;text-align:right;top:106.87px;font-size:7.6px;line-height:1;white-space:nowrap;color:#989898;font-weight:normal;transform:scaleX(0.92);transform-origin:100% 0;-webkit-text-stroke:0.15px #989898;">3V</div>
<div style="position:absolute;left:-983.0px;width:1000px;text-align:right;top:97.43px;font-size:7.6px;line-height:1;white-space:nowrap;color:#989898;font-weight:normal;transform:scaleX(0.92);transform-origin:100% 0;-webkit-text-stroke:0.15px #989898;">4V</div>
<div style="position:absolute;left:-983.0px;width:1000px;text-align:right;top:88.00px;font-size:7.6px;line-height:1;white-space:nowrap;color:#989898;font-weight:normal;transform:scaleX(0.92);transform-origin:100% 0;-webkit-text-stroke:0.15px #989898;">5V</div>
<div style="position:absolute;left:-983.0px;width:1000px;text-align:right;top:78.57px;font-size:7.6px;line-height:1;white-space:nowrap;color:#989898;font-weight:normal;transform:scaleX(0.92);transform-origin:100% 0;-webkit-text-stroke:0.15px #989898;">6V</div>
<div style="position:absolute;left:-478.8px;width:1000px;text-align:center;top:200.31px;font-size:7.2px;line-height:1;white-space:nowrap;color:#989898;font-weight:normal;transform:scaleX(0.98);transform-origin:50% 0;-webkit-text-stroke:0.15px #989898;">0.0ms</div>
<div style="position:absolute;left:-410.5px;width:1000px;text-align:center;top:200.31px;font-size:7.2px;line-height:1;white-space:nowrap;color:#989898;font-weight:normal;transform:scaleX(0.98);transform-origin:50% 0;-webkit-text-stroke:0.15px #989898;">0.5ms</div>
<div style="position:absolute;left:-342.20000000000005px;width:1000px;text-align:center;top:200.31px;font-size:7.2px;line-height:1;white-space:nowrap;color:#989898;font-weight:normal;transform:scaleX(0.98);transform-origin:50% 0;-webkit-text-stroke:0.15px #989898;">1.0ms</div>
<div style="position:absolute;left:-273.9px;width:1000px;text-align:center;top:200.31px;font-size:7.2px;line-height:1;white-space:nowrap;color:#989898;font-weight:normal;transform:scaleX(0.98);transform-origin:50% 0;-webkit-text-stroke:0.15px #989898;">1.5ms</div>
<div style="position:absolute;left:-205.60000000000002px;width:1000px;text-align:center;top:200.31px;font-size:7.2px;line-height:1;white-space:nowrap;color:#989898;font-weight:normal;transform:scaleX(0.98);transform-origin:50% 0;-webkit-text-stroke:0.15px #989898;">2.0ms</div>
<div style="position:absolute;left:-137.3px;width:1000px;text-align:center;top:200.31px;font-size:7.2px;line-height:1;white-space:nowrap;color:#989898;font-weight:normal;transform:scaleX(0.98);transform-origin:50% 0;-webkit-text-stroke:0.15px #989898;">2.5ms</div>
<div style="position:absolute;left:-69.0px;width:1000px;text-align:center;top:200.31px;font-size:7.2px;line-height:1;white-space:nowrap;color:#989898;font-weight:normal;transform:scaleX(0.98);transform-origin:50% 0;-webkit-text-stroke:0.15px #989898;">3.0ms</div>
<div style="position:absolute;left:-0.6999999999999886px;width:1000px;text-align:center;top:200.31px;font-size:7.2px;line-height:1;white-space:nowrap;color:#989898;font-weight:normal;transform:scaleX(0.98);transform-origin:50% 0;-webkit-text-stroke:0.15px #989898;">3.5ms</div>
<div style="position:absolute;left:67.60000000000002px;width:1000px;text-align:center;top:200.31px;font-size:7.2px;line-height:1;white-space:nowrap;color:#989898;font-weight:normal;transform:scaleX(0.98);transform-origin:50% 0;-webkit-text-stroke:0.15px #989898;">4.0ms</div>
<div style="position:absolute;left:135.9000000000001px;width:1000px;text-align:center;top:200.31px;font-size:7.2px;line-height:1;white-space:nowrap;color:#989898;font-weight:normal;transform:scaleX(0.98);transform-origin:50% 0;-webkit-text-stroke:0.15px #989898;">4.5ms</div>
<div style="position:absolute;left:204.20000000000005px;width:1000px;text-align:center;top:200.31px;font-size:7.2px;line-height:1;white-space:nowrap;color:#989898;font-weight:normal;transform:scaleX(0.98);transform-origin:50% 0;-webkit-text-stroke:0.15px #989898;">5.0ms</div>
<div style="position:absolute;left:-137.5px;width:1000px;text-align:center;top:73.97px;font-size:7.6px;line-height:1;white-space:nowrap;color:#4a2a3a;font-weight:bold;transform:scaleX(0.92);transform-origin:50% 0;">V(out)</div>
<svg style="position:absolute;left:0px;top:0px;" width="720" height="405" viewBox="0 0 720 405"><path d="M338.1 286.4 L338.1 238.1 L421.5 238.1" fill="none" stroke="#4646e2" stroke-width="1.05"/><circle cx="373" cy="238.1" r="1.15" fill="#4646e2"/><path d="M373 238.1 L373 240.4" fill="none" stroke="#4646e2" stroke-width="1.05"/><path d="M373 240.4 L375.8 241.68 L370.2 244.496 L375.8 247.31199999999998 L370.2 250.128 L373 253.2" fill="none" stroke="#4646e2" stroke-width="1.05"/><path d="M373 253.2 L373 278.6" fill="none" stroke="#4646e2" stroke-width="1.05"/><circle cx="373" cy="262.1" r="1.15" fill="#4646e2"/><path d="M373 262.1 L382.7 262.1" fill="none" stroke="#4646e2" stroke-width="1.05"/><circle cx="378.2" cy="262.1" r="1.15" fill="#4646e2"/><path d="M382.7 259.6 V264.6 M384.1 259.6 V264.6" stroke="#4646e2" stroke-width="1.1"/><path d="M384.1 262.1 L389.1 262.1" fill="none" stroke="#4646e2" stroke-width="1.05"/><path d="M389.1 260.2 H395.5 L398.5 262.4 L395.5 264.6 H389.1 Z" fill="none" stroke="#4646e2" stroke-width="1"/><rect x="334" y="270" width="8" height="12.3" fill="#c2c2c2"/><path d="M338.1 270 L340.90000000000003 271.23 L335.3 273.936 L340.90000000000003 276.642 L335.3 279.348 L338.1 282.3" fill="none" stroke="#4646e2" stroke-width="1.05"/><circle cx="338.2" cy="286.4" r="1.15" fill="#4646e2"/><path d="M338.2 286.4 L364.3 286.4" fill="none" stroke="#4646e2" stroke-width="1.05"/><path d="M364.3 282.3 V290.4" stroke="#4646e2" stroke-width="1.8"/><path d="M364.8 284.35 L373 278.6" fill="none" stroke="#4646e2" stroke-width="1.05"/><path d="M364.8 288.35 L373 295.3" fill="none" stroke="#4646e2" stroke-width="1.05"/><path d="M368.486 293.571 L371.586 294.171 L369.786 291.571" fill="none" stroke="#4646e2" stroke-width="0.9"/><path d="M373 295.3 L373 349.7" fill="none" stroke="#4646e2" stroke-width="1.05"/><path d="M338.2 286.4 L338.2 291.6" fill="none" stroke="#4646e2" stroke-width="1.05"/><path d="M329.3 296 V304.6" stroke="#4646e2" stroke-width="1.8"/><path d="M329.8 298.3 L338.2 291.6" fill="none" stroke="#4646e2" stroke-width="1.05"/><path d="M329.8 302.3 L338.2 308.3" fill="none" stroke="#4646e2" stroke-width="1.05"/><path d="M333.642 306.78000000000003 L336.742 307.38 L334.942 304.78000000000003" fill="none" stroke="#4646e2" stroke-width="0.9"/><path d="M338.2 308.3 L338.2 336.3" fill="none" stroke="#4646e2" stroke-width="1.05"/><path d="M338.2 336.3 L341.0 337.56 L335.4 340.332 L341.0 343.104 L335.4 345.876 L338.2 348.9" fill="none" stroke="#4646e2" stroke-width="1.05"/><path d="M338.2 348.9 L338.2 354.1" fill="none" stroke="#4646e2" stroke-width="1.05"/><path d="M335.2 354.1 H341.2 L338.2 357.40000000000003 Z" fill="none" stroke="#4646e2" stroke-width="1.0" stroke-linejoin="miter"/><path d="M316.5 300.1 L329.3 300.1" fill="none" stroke="#4646e2" stroke-width="1.05"/><circle cx="316.5" cy="300.1" r="1.15" fill="#4646e2"/><path d="M306.2 300.1 L316.5 300.1" fill="none" stroke="#4646e2" stroke-width="1.05"/><path d="M304.7 297.35 V302.85 M306.2 297.35 V302.85" stroke="#4646e2" stroke-width="1.1"/><path d="M304.7 300.1 L291.5 300.1 L291.5 320.6" fill="none" stroke="#4646e2" stroke-width="1.05"/><circle cx="291.5" cy="325.7" r="5.1" fill="none" stroke="#4646e2" stroke-width="1.0"/><path d="M290.2 323.09999999999997 L291.5 324.5 L292.8 323.09999999999997 M291.5 320.59999999999997 V327.2 M289.5 328.7 H293.5" fill="none" stroke="#4646e2" stroke-width="0.8"/><path d="M291.5 330.8 L291.5 332.8" fill="none" stroke="#4646e2" stroke-width="1.05"/><path d="M288.9 332.8 H294.1 L291.5 335.7 Z" fill="none" stroke="#4646e2" stroke-width="1.0" stroke-linejoin="miter"/><path d="M316.5 300.1 L316.5 329.2 L349.6 329.2" fill="none" stroke="#4646e2" stroke-width="1.05"/><path d="M349.6 329.2 L350.81 326.4 L353.47200000000004 332.0 L356.134 326.4 L358.796 332.0 L361.7 329.2" fill="none" stroke="#4646e2" stroke-width="1.05"/><path d="M361.7 329.2 L373 329.2" fill="none" stroke="#4646e2" stroke-width="1.05"/><circle cx="373" cy="329.2" r="1.15" fill="#4646e2"/><circle cx="373" cy="340.9" r="1.15" fill="#4646e2"/><path d="M373 340.9 L405.5 340.9 L405.5 350.6" fill="none" stroke="#4646e2" stroke-width="1.05"/><path d="M402.5 350.6 H408.5 M402.5 352.5 H408.5" stroke="#4646e2" stroke-width="1.1"/><path d="M405.5 352.5 L405.5 357.3" fill="none" stroke="#4646e2" stroke-width="1.05"/><path d="M402.25 357.3 H408.75 L405.5 360.6 Z" fill="none" stroke="#4646e2" stroke-width="1.0" stroke-linejoin="miter"/><path d="M373 349.7 L375.8 350.83 L370.2 353.316 L375.8 355.802 L370.2 358.288 L373 361" fill="none" stroke="#4646e2" stroke-width="1.05"/><path d="M373 361 L373 362.5" fill="none" stroke="#4646e2" stroke-width="1.05"/><path d="M369.8 362.5 H376.2 L373 365.7 Z" fill="none" stroke="#4646e2" stroke-width="1.0" stroke-linejoin="miter"/><path d="M424.4 248.8 L424.4 258.2" fill="none" stroke="#4646e2" stroke-width="1.05"/><circle cx="424.4" cy="263.3" r="5.1" fill="none" stroke="#4646e2" stroke-width="1.0"/><path d="M423.09999999999997 260.7 L424.4 262.1 L425.7 260.7 M424.4 258.2 V264.8 M422.4 266.3 H426.4" fill="none" stroke="#4646e2" stroke-width="0.8"/><path d="M424.4 268.4 L424.4 276.2" fill="none" stroke="#4646e2" stroke-width="1.05"/><path d="M421.59999999999997 276.2 H427.2 L424.4 279.4 Z" fill="none" stroke="#4646e2" stroke-width="1.0" stroke-linejoin="miter"/><path d="M362.4 300.2 H365.6" stroke="#4646e2" stroke-width="0.9"/><path d="M286.5 350.3 H291" stroke="#807888" stroke-width="0.6"/></svg>
<div style="position:absolute;left:364.7px;top:242.76px;font-size:4.4px;line-height:1;white-space:nowrap;color:#000;font-weight:bold;transform:scaleX(0.925);transform-origin:0 0;">R3</div>
<div style="position:absolute;left:361.7px;top:248.66px;font-size:4.4px;line-height:1;white-space:nowrap;color:#000;font-weight:bold;transform:scaleX(0.981);transform-origin:0 0;">6.8k</div>
<div style="position:absolute;left:381.0px;top:255.86px;font-size:4.4px;line-height:1;white-space:nowrap;color:#000;font-weight:bold;transform:scaleX(0.96);transform-origin:0 0;">C1</div>
<div style="position:absolute;left:380.0px;top:265.46px;font-size:4.4px;line-height:1;white-space:nowrap;color:#000;font-weight:bold;transform:scaleX(0.929);transform-origin:0 0;">10µ</div>
<div style="position:absolute;left:340.8px;top:272.66px;font-size:4.4px;line-height:1;white-space:nowrap;color:#000;font-weight:bold;transform:scaleX(0.978);transform-origin:0 0;">R4</div>
<div style="position:absolute;left:340.8px;top:279.26px;font-size:4.4px;line-height:1;white-space:nowrap;color:#000;font-weight:bold;transform:scaleX(0.868);transform-origin:0 0;">100k</div>
<div style="position:absolute;left:371.8px;top:282.16px;font-size:4.4px;line-height:1;white-space:nowrap;color:#000;font-weight:bold;transform:scaleX(0.801);transform-origin:0 0;">Q1</div>
<div style="position:absolute;left:371.8px;top:288.76px;font-size:4.4px;line-height:1;white-space:nowrap;color:#000;font-weight:bold;transform:scaleX(0.828);transform-origin:0 0;">2SC1815</div>
<div style="position:absolute;left:336.2px;top:295.76px;font-size:4.4px;line-height:1;white-space:nowrap;color:#000;font-weight:bold;transform:scaleX(0.869);transform-origin:0 0;">Q2</div>
<div style="position:absolute;left:336.2px;top:301.96px;font-size:4.4px;line-height:1;white-space:nowrap;color:#000;font-weight:bold;transform:scaleX(0.85);transform-origin:0 0;">2SC1815</div>
<div style="position:absolute;left:302.2px;top:293.76px;font-size:4.4px;line-height:1;white-space:nowrap;color:#000;font-weight:bold;transform:scaleX(1.013);transform-origin:0 0;">C2</div>
<div style="position:absolute;left:301.5px;top:303.36px;font-size:4.4px;line-height:1;white-space:nowrap;color:#000;font-weight:bold;transform:scaleX(0.915);transform-origin:0 0;">10µ</div>
<div style="position:absolute;left:295.6px;top:317.76px;font-size:4.4px;line-height:1;white-space:nowrap;color:#000;font-weight:bold;transform:scaleX(1.059);transform-origin:0 0;">V1</div>
<div style="position:absolute;left:352.8px;top:323.06px;font-size:4.4px;line-height:1;white-space:nowrap;color:#000;font-weight:bold;transform:scaleX(0.942);transform-origin:0 0;">R6</div>
<div style="position:absolute;left:351.40000000000003px;top:332.86px;font-size:4.4px;line-height:1;white-space:nowrap;color:#000;font-weight:bold;transform:scaleX(0.889);transform-origin:0 0;">120k</div>
<div style="position:absolute;left:340.7px;top:337.66px;font-size:4.4px;line-height:1;white-space:nowrap;color:#000;font-weight:bold;transform:scaleX(1.013);transform-origin:0 0;">R2</div>
<div style="position:absolute;left:340.7px;top:343.96px;font-size:4.4px;line-height:1;white-space:nowrap;color:#000;font-weight:bold;transform:scaleX(1.035);transform-origin:0 0;">820</div>
<div style="position:absolute;left:376.0px;top:351.56px;font-size:4.4px;line-height:1;white-space:nowrap;color:#000;font-weight:bold;transform:scaleX(0.942);transform-origin:0 0;">R1</div>
<div style="position:absolute;left:376.0px;top:358.06px;font-size:4.4px;line-height:1;white-space:nowrap;color:#000;font-weight:bold;transform:scaleX(1.001);transform-origin:0 0;">1k</div>
<div style="position:absolute;left:405.5px;top:346.16px;font-size:4.4px;line-height:1;white-space:nowrap;color:#000;font-weight:bold;transform:scaleX(1.085);transform-origin:0 0;">C3</div>
<div style="position:absolute;left:407.6px;top:354.56px;font-size:4.4px;line-height:1;white-space:nowrap;color:#000;font-weight:bold;transform:scaleX(0.888);transform-origin:0 0;">10µ</div>
<div style="position:absolute;left:427.8px;top:255.36px;font-size:4.4px;line-height:1;white-space:nowrap;color:#000;font-weight:bold;transform:scaleX(0.929);transform-origin:0 0;">V2</div>
<div style="position:absolute;left:428.5px;top:278.76px;font-size:4.4px;line-height:1;white-space:nowrap;color:#000;font-weight:bold;transform:scaleX(0.879);transform-origin:0 0;">12</div>
<div style="position:absolute;left:421.8px;top:236.56px;font-size:4.4px;line-height:1;white-space:nowrap;color:#000;font-weight:bold;transform:scaleX(0.908);transform-origin:0 0;">+V</div>
<div style="position:absolute;left:389.9px;top:260.41px;font-size:4.6px;line-height:1;white-space:nowrap;color:#000;font-weight:bold;">out</div>
<div style="position:absolute;left:295.2px;top:342.80px;font-size:2.6px;line-height:1;white-space:nowrap;color:#111;font-weight:bold;transform:scaleX(1.33);transform-origin:0 0;">SINE(0 1 1k)</div>
<div style="position:absolute;left:423.2px;top:249.6px;font-size:4.4px;line-height:1;font-weight:bold;color:#000;transform:rotate(90deg);transform-origin:0 0;white-space:nowrap">+V</div>
<div style="position:absolute;left:0px;top:372.7px;width:720px;height:11.2px;background:#efefef"></div>
<div style="position:absolute;left:0px;top:372.7px;width:720px;height:0.6px;background:#f4dede"></div>
<div style="position:absolute;left:0px;top:382.4px;width:720px;height:1.2px;background:#fbfbfb"></div>
<div style="position:absolute;left:0px;top:383.8px;width:720px;height:21.2px;background:#1e2e3f"></div>
<div style="position:absolute;left:0px;top:383.8px;width:25px;height:21.2px;background:#22373f"></div>
<svg style="position:absolute;left:7.9px;top:389.6px;overflow:visible" width="10" height="10" viewBox="0 0 10 10"><path d="M0 1.2 L3.9 0.7 V4.5 H0 Z M4.5 0.6 L9.2 0 V4.5 H4.5 Z M0 5.1 H3.9 V8.8 L0 8.3 Z M4.5 5.1 H9.2 V9.4 L4.5 8.9 Z" fill="#fff"/></svg>
<div style="position:absolute;left:25px;top:383.8px;width:181.7px;height:21.2px;background:#f2f2f2"></div>
<svg style="position:absolute;left:31.5px;top:389px;overflow:visible" width="10" height="11" viewBox="0 0 10 11"><circle cx="6" cy="4" r="3.2" fill="none" stroke="#222" stroke-width="1"/><path d="M3.8 6.3 L0.8 9.6" stroke="#222" stroke-width="1.1"/></svg>
<div style="position:absolute;left:46px;top:392.11px;font-size:7.2px;line-height:1;white-space:nowrap;color:#333;font-weight:normal;transform:scaleX(0.98);transform-origin:0 0;">ここに入力して検索</div>
<svg style="position:absolute;left:213.5px;top:389.2px;overflow:visible" width="11" height="11" viewBox="0 0 11 11"><circle cx="5.5" cy="5.5" r="3.9" fill="none" stroke="#fff" stroke-width="1.2"/></svg>
<svg style="position:absolute;left:239.5px;top:389.5px;overflow:visible" width="11" height="10" viewBox="0 0 11 10"><rect x="2.5" y="1.5" width="5.5" height="7" fill="none" stroke="#fff" stroke-width="0.9"/><path d="M0.6 2 V8 M10 2 V8" stroke="#fff" stroke-width="0.9"/></svg>
<svg style="position:absolute;left:265px;top:388.2px;overflow:visible" width="13" height="13" viewBox="0 0 13 13"><defs><linearGradient id="eg" x1="0" y1="0" x2="1" y2="0"><stop offset="0" stop-color="#2fb8e8"/><stop offset="1" stop-color="#5fd86a"/></linearGradient></defs><circle cx="6.5" cy="6.5" r="6" fill="#1b86d8"/><path d="M0.6 6.2 Q1.2 0.5 6.5 0.5 Q12.2 0.7 12.5 6.3 Q12.4 9.2 9.6 9.3 Q7.2 9.3 6.6 7.7 Q9.4 7.6 9.2 5.6 Q8.6 3.2 5.6 3.5 Q2.2 4.3 0.6 6.2 Z" fill="url(#eg)"/><path d="M3.6 6.8 Q3.6 10.8 8.2 11.8 Q3.4 12.4 1.4 9.2 Q0.4 7.4 0.6 6.2 Q2.0 4.6 3.6 6.8 Z" fill="#0b4fa0"/></svg>
<svg style="position:absolute;left:290.5px;top:388.5px;overflow:visible" width="12" height="12" viewBox="0 0 12 12"><path d="M3.5 3 Q3.5 0.5 6 0.5 Q8.5 0.5 8.5 3" fill="none" stroke="#fff" stroke-width="0.9"/><rect x="0.8" y="3" width="10.4" height="8.7" fill="#f4f4f4"/><rect x="3.3" y="5.2" width="2.4" height="2.4" fill="#f25022"/><rect x="6.3" y="5.2" width="2.4" height="2.4" fill="#7fba00"/><rect x="3.3" y="8.1" width="2.4" height="2.4" fill="#00a4ef"/><rect x="6.3" y="8.1" width="2.4" height="2.4" fill="#ffb900"/></svg>
<svg style="position:absolute;left:317px;top:389px;overflow:visible" width="12" height="11" viewBox="0 0 12 11"><path d="M0.5 1 H4.5 L5.5 2 H11.5 V10.5 H0.5 Z" fill="#f8c840"/><rect x="0.5" y="3.5" width="11" height="7" fill="#ffd45a"/><rect x="3" y="6" width="6" height="2" fill="#3aa0e8"/></svg>
<svg style="position:absolute;left:342.3px;top:388.5px;overflow:visible" width="13.5" height="12" viewBox="0 0 13.5 12"><rect x="0.3" y="1" width="12.8" height="10.2" rx="0.6" fill="#1d8fe0"/><path d="M0.3 1.6 L6.7 6.6 L13.1 1.6 V1 H0.3 Z" fill="#5ab8f4"/><path d="M0.3 10.8 L5 6 M13.1 10.8 L8.4 6" stroke="#1070c0" stroke-width="0.6"/></svg>
<svg style="position:absolute;left:368.3px;top:388.5px;overflow:visible" width="13" height="12" viewBox="0 0 13 12"><rect x="1" y="4" width="11.5" height="7" fill="#f2f2f2"/><path d="M1 4.2 L6.7 8 L12.5 4.2" fill="none" stroke="#999" stroke-width="0.6"/><rect x="7.5" y="7.2" width="3.5" height="1.1" fill="#d04040"/><path d="M0.8 2.8 L3.6 0.3 V1.8 H6.5 V3.9 H3.6 V5.4 Z" fill="#30b040"/></svg>
<svg style="position:absolute;left:394.5px;top:388px;overflow:visible" width="13" height="13" viewBox="0 0 13 13"><circle cx="6.5" cy="6.8" r="5.8" fill="#ff5a2a"/><path d="M1 5 Q1.3 1 5.5 0.6 Q3.5 2 4 3.3 Q2 3.5 1 5 Z" fill="#ffb02a"/><path d="M7.5 1 Q12.5 2.5 12.3 7 Q11 3.5 8.5 3.5 Z" fill="#ffcf3a"/><circle cx="7" cy="7.2" r="3.5" fill="#7b3ad6"/><path d="M3.2 8 Q4.5 11 8 10.7 Q11 10.2 12 7.5 Q10.5 12.3 6.5 12.5 Q2 12 1.2 8 Z" fill="#ff8a2a"/></svg>
<svg style="position:absolute;left:419px;top:388px;overflow:visible" width="14" height="13" viewBox="0 0 14 13"><path d="M4 0.8 L12.8 2.8 L10 12.2 L1 10 Z" fill="#d6eef4" stroke="#8ac4d8" stroke-width="0.6"/><path d="M4 0.8 L1 10 L2.2 10.3 L5 1 Z" fill="#5aa8c4"/><path d="M9.5 2.2 L12.8 2.8 L11.6 7 Z" fill="#f0f8fa"/></svg>
<div style="position:absolute;left:389.7px;top:403.8px;width:22.3px;height:1.2px;background:#8cc0e8"></div>
<div style="position:absolute;left:416px;top:403.8px;width:19.5px;height:1.2px;background:#8cc0e8"></div>
<div style="position:absolute;left:439.7px;top:383.8px;width:25px;height:21.2px;background:#3b4a5a"></div>
<div style="position:absolute;left:439.7px;top:403.8px;width:25px;height:1.2px;background:#9cd0f8"></div>
<svg style="position:absolute;left:445.5px;top:387.8px;overflow:visible" width="13" height="13" viewBox="0 0 13 13"><path d="M1 1.2 V11.8 L12 1.2" fill="none" stroke="#0a0a0a" stroke-width="1.2"/><path d="M1 1.2 H4" stroke="#0a0a0a" stroke-width="0.8"/><path d="M3.2 2 L2.2 6.2 H5 M6.5 2 H10.8 M8.6 2 L7.3 6.5" fill="none" stroke="#e02020" stroke-width="1.3"/></svg>
<svg style="position:absolute;left:559.5px;top:388.6px;overflow:visible" width="12" height="12" viewBox="0 0 12 12"><path d="M7 0.8 A5.2 5.2 0 1 1 0.8 7.2 A4.3 4.3 0 0 0 7 0.8 Z" fill="#ffd400"/><path d="M1.2 4.6 Q0.6 3.2 2 2.8 Q2.6 1.2 4.4 1.8 Q6 1.8 6 3.4 Q6.8 4.6 5.4 5 H2 Q1.2 5 1.2 4.6 Z" fill="#e4ecf4"/></svg>
<div style="position:absolute;left:575.2px;top:391.30px;font-size:7.8px;line-height:1;white-space:nowrap;color:#fff;font-weight:normal;transform:scaleX(0.92);transform-origin:0 0;-webkit-text-stroke:0.15px #fff;">4°C</div>
<svg style="position:absolute;left:595.5px;top:391.2px;overflow:visible" width="8" height="6" viewBox="0 0 8 6"><path d="M0.8 4.8 L4 1.3 L7.2 4.8" fill="none" stroke="#fff" stroke-width="0.9"/></svg>
<svg style="position:absolute;left:608.6px;top:389.6px;overflow:visible" width="8" height="10" viewBox="0 0 8 10"><rect x="0.7" y="2.2" width="6.4" height="5.6" rx="0.8" fill="none" stroke="#fff" stroke-width="0.8"/><circle cx="3.9" cy="4.6" r="1.2" fill="none" stroke="#fff" stroke-width="0.7"/><path d="M1.5 0.8 H6.3 M1.5 9.2 H6.3" stroke="#fff" stroke-width="0.7"/></svg>
<svg style="position:absolute;left:619.8px;top:390.4px;overflow:visible" width="10" height="9" viewBox="0 0 10 9"><rect x="1.8" y="0.6" width="7.4" height="5.6" fill="none" stroke="#fff" stroke-width="0.8"/><path d="M4 8.3 H8 M6 6.2 V8.3 M0.4 1.5 V5 H1.8" fill="none" stroke="#fff" stroke-width="0.8"/></svg>
<svg style="position:absolute;left:632px;top:390.4px;overflow:visible" width="10" height="9" viewBox="0 0 10 9"><path d="M0.6 2.9 H2.4 L4.8 0.8 V8 L2.4 5.9 H0.6 Z" fill="none" stroke="#fff" stroke-width="0.8"/><path d="M6.2 2.8 Q7 4.4 6.2 6 M7.6 1.8 Q8.8 4.4 7.6 7 M9 0.9 Q10.5 4.4 9 7.9" fill="none" stroke="#fff" stroke-width="0.6"/></svg>
<div style="position:absolute;left:149.29999999999995px;width:1000px;text-align:center;top:389.97px;font-size:10.2px;line-height:1;white-space:nowrap;color:#fff;font-weight:normal;transform:scaleX(0.82);transform-origin:50% 0;">A</div>
<div style="position:absolute;left:173.60000000000002px;width:1000px;text-align:center;top:386.66px;font-size:6.9px;line-height:1;white-space:nowrap;color:#fff;font-weight:normal;transform:scaleX(0.85);transform-origin:50% 0;">23:17</div>
<div style="position:absolute;left:173.70000000000005px;width:1000px;text-align:center;top:396.36px;font-size:6.9px;line-height:1;white-space:nowrap;color:#fff;font-weight:normal;transform:scaleX(0.88);transform-origin:50% 0;">2021/10/29</div>
<svg style="position:absolute;left:698px;top:390.2px;overflow:visible" width="10" height="10" viewBox="0 0 10 10"><path d="M0.6 0.6 H9.2 V6.8 H6 L4.6 8.6 L3.2 6.8 H0.6 Z" fill="none" stroke="#fff" stroke-width="0.85"/></svg>
</body></html>
